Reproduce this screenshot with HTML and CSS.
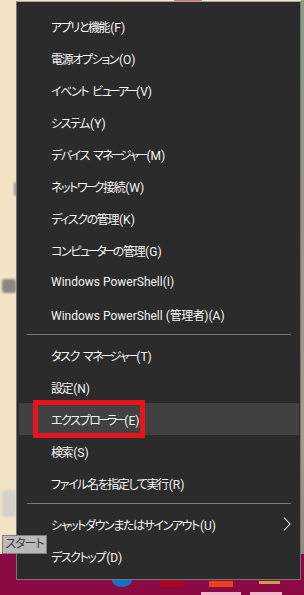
FILE: index.html
```html
<!DOCTYPE html>
<html lang="ja">
<head>
  <meta charset="UTF-8">
  <meta name="viewport" content="width=device-width, initial-scale=1.0">
  <title>クイック リンク メニュー</title>
  <link rel="stylesheet" href="styles.css">
</head>
<body>
  <div class="desktop">
    <div class="wall">
      <div class="blob blob-a"></div>
      <div class="blob blob-b"></div>
      <div class="blob blob-c"></div>
      <div class="top-strip"></div>
      <div class="edge"></div>
    </div>
    <div class="taskbar">
      <span class="tb-icon tb-blue"></span>
      <span class="tb-icon tb-red"></span>
      <span class="tb-icon tb-orange"></span>
      <span class="tb-icon tb-yellow"></span>
    </div>
    <div class="tb-tabs">
      <span class="tb-tab"></span>
      <span class="tb-tab tb-tab-wide"></span>
    </div>
  </div>

  <div class="menu">
    <ul class="menu-group">
      <li class="menu-item"><span class="label"><span class="jp">アプリと機能</span>(F)</span></li>
      <li class="menu-item"><span class="label"><span class="jp">電源オプション</span>(O)</span></li>
      <li class="menu-item"><span class="label"><span class="jp">イベント</span> <span class="jp">ビュ<span class="cho">ー</span>ア<span class="cho">ー</span></span>(V)</span></li>
      <li class="menu-item"><span class="label"><span class="jp">システム</span>(Y)</span></li>
      <li class="menu-item"><span class="label"><span class="jp">デバイス</span> <span class="jp">マネ<span class="cho">ー</span>ジャ<span class="cho">ー</span></span>(M)</span></li>
      <li class="menu-item"><span class="label"><span class="jp">ネットワ<span class="cho">ー</span>ク接続</span>(W)</span></li>
      <li class="menu-item"><span class="label"><span class="jp">ディスクの管理</span>(K)</span></li>
      <li class="menu-item"><span class="label"><span class="jp">コンピュ<span class="cho">ー</span>タ<span class="cho">ー</span>の管理</span>(G)</span></li>
      <li class="menu-item"><span class="label">Windows PowerShell(I)</span></li>
      <li class="menu-item"><span class="label">Windows PowerShell (<span class="kanji">管理者</span>)(A)</span></li>
    </ul>
    <div class="separator"></div>
    <ul class="menu-group">
      <li class="menu-item"><span class="label"><span class="jp">タスク</span> <span class="jp">マネ<span class="cho">ー</span>ジャ<span class="cho">ー</span></span>(T)</span></li>
      <li class="menu-item"><span class="label"><span class="jp">設定</span>(N)</span></li>
      <li class="menu-item active"><span class="label"><span class="jp">エクスプロ<span class="cho">ー</span>ラ<span class="cho">ー</span></span>(E)</span><span class="mark"></span></li>
      <li class="menu-item"><span class="label"><span class="jp">検索</span>(S)</span></li>
      <li class="menu-item"><span class="label"><span class="jp">ファイル名を指定して実行</span>(R)</span></li>
    </ul>
    <div class="separator"></div>
    <ul class="menu-group">
      <li class="menu-item">
        <span class="label"><span class="jp">シャットダウンまたはサインアウト</span>(U)</span>
        <svg class="chevron" width="8" height="14" viewBox="0 0 8 14">
          <path d="M1 0.5 L7 7 L1 13.5" fill="none" stroke="#e8e8e8" stroke-width="1.1"/>
        </svg>
      </li>
      <li class="menu-item"><span class="label"><span class="jp">デスクトップ</span>(D)</span></li>
    </ul>
  </div>

  <div class="tooltip">スタート</div>
</body>
</html>
```

FILE: styles.css
```css
body {
  margin: 0;
  width: 304px;
  height: 595px;
  overflow: hidden;
  background-color: #f4e4c6;
  font-family: Roboto, "Noto Sans CJK JP", sans-serif;
  font-feature-settings: "palt";
}

.desktop {
  position: relative;
  height: 595px;
  display: flex;
  flex-direction: column;
}

.wall {
  flex: 1;
  display: flex;
  justify-content: flex-end;
}

.edge {
  width: 3px;
  background: linear-gradient(#8d9a86, #9b968b 40%, #a39c8e 80%, #8f8a80);
}

.top-strip {
  position: absolute;
  top: 0;
  left: 174px;
  width: 28px;
  height: 2px;
  background-color: #e4706a;
}

.blob {
  position: absolute;
  border-radius: 3px;
  filter: blur(1px);
}

.blob-a {
  left: 14px;
  top: 182px;
  width: 3px;
  height: 14px;
  background-color: #9a968e;
}

.blob-b {
  left: 2px;
  top: 279px;
  width: 14px;
  height: 14px;
  background-color: #8c8880;
}

.blob-c {
  left: 2px;
  top: 490px;
  width: 14px;
  height: 27px;
  background-color: #d6d2ca;
}

.taskbar {
  height: 41px;
  background-color: #8b0a43;
  display: flex;
  align-items: flex-start;
  padding-left: 112px;
}

.tb-icon {
  display: block;
  height: 6px;
  margin-top: 27px;
}

.tb-blue {
  width: 20px;
  height: 14px;
  margin-top: 19px;
  border-radius: 50%;
  background-color: #1670c8;
}

.tb-red {
  width: 23px;
  margin-left: 28px;
  background-color: #a80818;
}

.tb-orange {
  width: 24px;
  margin-left: 26px;
  background-color: #e8421a;
}

.tb-yellow {
  width: 21px;
  height: 3px;
  margin-left: 26px;
  background-color: #c9a048;
}

.tb-tabs {
  position: absolute;
  left: 201px;
  bottom: 0;
  display: flex;
  gap: 9px;
}

.tb-tab {
  width: 40px;
  height: 3px;
  background-color: #f4b4cc;
}

.tb-tab-wide {
  width: 32px;
}

.menu {
  position: absolute;
  left: 16px;
  top: 1px;
  width: 285px;
  height: 579px;
  box-sizing: border-box;
  background-color: #2b2b2b;
  border: 1px solid #767676;
  border-top-color: #a8a8a8;
  padding: 8px 0 7px;
}

.menu-group {
  list-style: none;
  margin: 0;
  padding: 0;
}

.menu-item {
  position: relative;
  display: flex;
  align-items: center;
  height: 32px;
  padding: 0 9px 0 34px;
  color: #f4f4f4;
  font-size: 12px;
}

.label {
  white-space: nowrap;
}

.label .jp {
  letter-spacing: -1.4px;
  margin-right: 1px;
}

.label .cho {
  margin: 0 -1.5px;
}

.label .kanji {
  letter-spacing: -0.5px;
}

.menu-item.active {
  margin: 0 1px 0 2px;
  padding-left: 32px;
  background-color: #414141;
}

.mark {
  position: absolute;
  left: 14px;
  top: -3px;
  width: 112px;
  height: 38px;
  box-sizing: border-box;
  border: 5px solid #e8141c;
}

.chevron {
  margin-left: auto;
}

.separator {
  height: 1px;
  margin: 4px 9px 4px 10px;
  background-color: #7a7a7a;
}

.tooltip {
  position: absolute;
  left: 2px;
  top: 535px;
  width: 45px;
  height: 19px;
  box-sizing: border-box;
  background-color: #b9b9b9;
  border: 1px solid #7e7e7e;
  color: #3c3c3c;
  font-size: 12px;
  line-height: 17px;
  text-align: center;
  letter-spacing: -1px;
}
```
